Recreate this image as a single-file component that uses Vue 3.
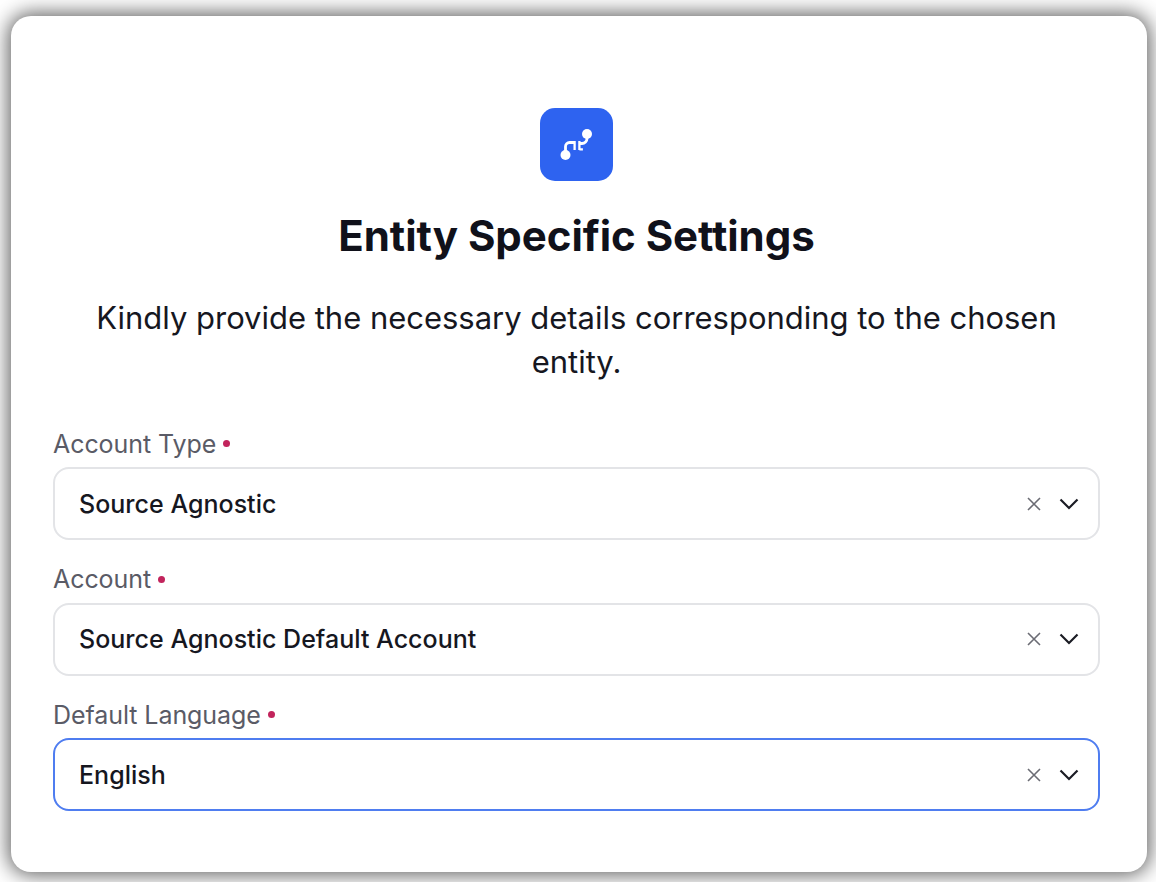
<template>
  <div class="page">
    <section class="card">
      <div class="badge">
        <svg width="73" height="73" viewBox="0 0 73 73" fill="none">
          <circle cx="25.500" cy="47" r="5" fill="#fff" />
          <circle cx="47" cy="26" r="5" fill="#fff" />
          <path d="M25.500 44v-5.500a4 4 0 0 1 4-4h5M47 29v1.500a5 5 0 0 1-5 5h-3" stroke="#fff" stroke-width="2.8" />
          <path d="M34.600 33v9M39.400 33v9M39.400 41.300h3.500" stroke="#fff" stroke-width="2.300" />
        </svg>
      </div>
      <h1 class="title">Entity Specific Settings</h1>
      <p class="subtitle">Kindly provide the necessary details corresponding to the chosen entity.</p>
      <div class="fields">
        <div v-for="field in fields" :key="field.label" class="field">
          <label class="label"><span class="label-text">{{ field.label }}</span><span class="dot"></span></label>
          <div class="select" :class="{ focused: field.focused }">
            <span class="value">{{ field.value }}</span>
            <svg class="clear" width="16" height="16" viewBox="0 0 16 16" fill="none">
              <path d="M2 2l12 12M14 2L2 14" stroke="#6b6c74" stroke-width="1.6" />
            </svg>
            <svg class="chevron" width="20" height="12" viewBox="0 0 20 12" fill="none">
              <path d="M1.500 1.500L10 10l8.500-8.500" stroke="#1b1c24" stroke-width="2.2" />
            </svg>
          </div>
        </div>
      </div>
    </section>
  </div>
</template>

<script setup>
const fields = [
  { label: 'Account Type', value: 'Source Agnostic' },
  { label: 'Account', value: 'Source Agnostic Default Account' },
  { label: 'Default Language', value: 'English', focused: true },
]
</script>

<style>
html, body { margin: 0; background: #fff; }
</style>

<style scoped>
.page {
  width: 1156px;
  height: 882px;
  box-sizing: border-box;
  padding: 16px 9px 10px 11px;
  overflow: hidden;
  font-family: Inter, "Liberation Sans", sans-serif;
}
.card {
  height: 856px;
  box-sizing: border-box;
  padding: 92px 47px 0 42px;
  background: #fff;
  border-radius: 20px;
  box-shadow: 0 0 20px 3px rgba(0, 0, 0, 0.62);
  display: flex;
  flex-direction: column;
  align-items: center;
}
.badge {
  width: 73px;
  height: 73px;
  border-radius: 15px;
  background: #2e63f0;
  flex: none;
}
.badge svg { display: block; }
.title {
  margin: 28px 0 0;
  font-size: 42px;
  line-height: 54px;
  font-weight: 700;
  letter-spacing: -0.05px;
  color: #10111a;
  white-space: nowrap;
}
.subtitle {
  margin: 33px 0 0;
  width: 1000px;
  font-size: 31px;
  line-height: 44px;
  font-weight: 400;
  letter-spacing: -0.02px;
  text-align: center;
  color: #16171f;
}
.fields {
  margin-top: 44px;
  width: 100%;
  display: flex;
  flex-direction: column;
  gap: 23.5px;
}
.label {
  display: flex;
  align-items: center;
  height: 31px;
  margin-bottom: 8px;
  font-size: 25px;
  letter-spacing: -0.07px;
  color: #5a5b66;
}
.dot {
  width: 7px;
  height: 7px;
  margin-left: 7px;
  border-radius: 50%;
  background: #c2245c;
}
.select {
  height: 73px;
  box-sizing: border-box;
  display: flex;
  align-items: center;
  padding: 0 19px 0 24px;
  border: 2px solid #e3e4e7;
  border-radius: 16px;
}
.select.focused { border-color: #4f7df0; }
.value {
  flex: 1;
  font-size: 25px;
  font-weight: 500;
  letter-spacing: 0.02px;
  color: #16171f;
}
.clear { margin-right: 17px; }
</style>
